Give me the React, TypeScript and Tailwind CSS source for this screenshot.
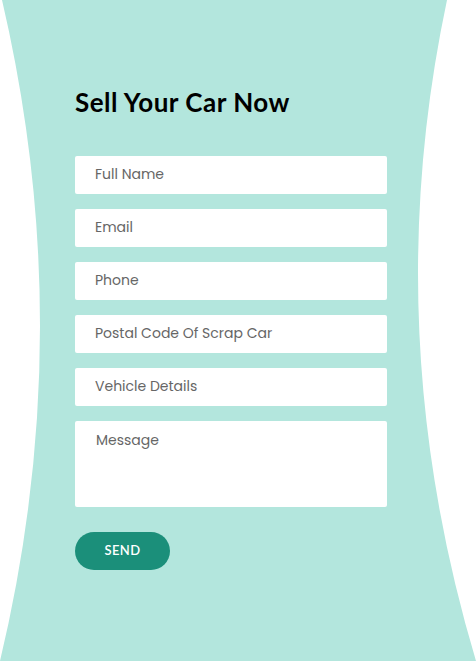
import React from 'react';

const fields = ['Full Name', 'Email', 'Phone', 'Postal Code Of Scrap Car', 'Vehicle Details'];

const Backdrop: React.FC = () => (
  <svg className="absolute inset-0 h-full w-full" viewBox="0 0 476 661" preserveAspectRatio="none">
    <path d="M2 0 L447 0 Q377 330 476 661 L0 661 Q79 330 2 0 Z" fill="#b3e6dd" />
  </svg>
);

const App: React.FC = () => {
  return (
    <div className="relative w-[476px] h-[661px] overflow-hidden bg-white font-['Poppins','Open_Sans',sans-serif]">
      <Backdrop />
      <form className="relative flex flex-col pl-[75px] pt-[85px] w-[387px]" onSubmit={(e) => e.preventDefault()}>
        <h2 className="text-[26px] font-bold leading-[34px] text-black tracking-[0.5px] font-['Lato',sans-serif] mb-[37px]">
          Sell Your Car Now
        </h2>

        <div className="flex flex-col gap-[15px]">
          {fields.map((f) => (
            <input
              key={f}
              placeholder={f}
              className="h-[38px] w-[312px] rounded-[2px] bg-white px-[20px] pb-[2px] text-[14px] text-[#555] placeholder:text-[#666] outline-none"
            />
          ))}
          <textarea
            placeholder="Message"
            className="h-[86px] w-[312px] resize-none rounded-[2px] bg-white px-[21px] pt-[9px] text-[14px] text-[#555] placeholder:text-[#666] outline-none"
          />
        </div>

        <button
          type="submit"
          className="mt-[25px] h-[38px] w-[95px] rounded-full bg-[#1b8f7a] text-[13px] font-semibold tracking-[0.4px] text-white font-['Lato',sans-serif]"
        >
          SEND
        </button>
      </form>
    </div>
  );
};

export default App;
